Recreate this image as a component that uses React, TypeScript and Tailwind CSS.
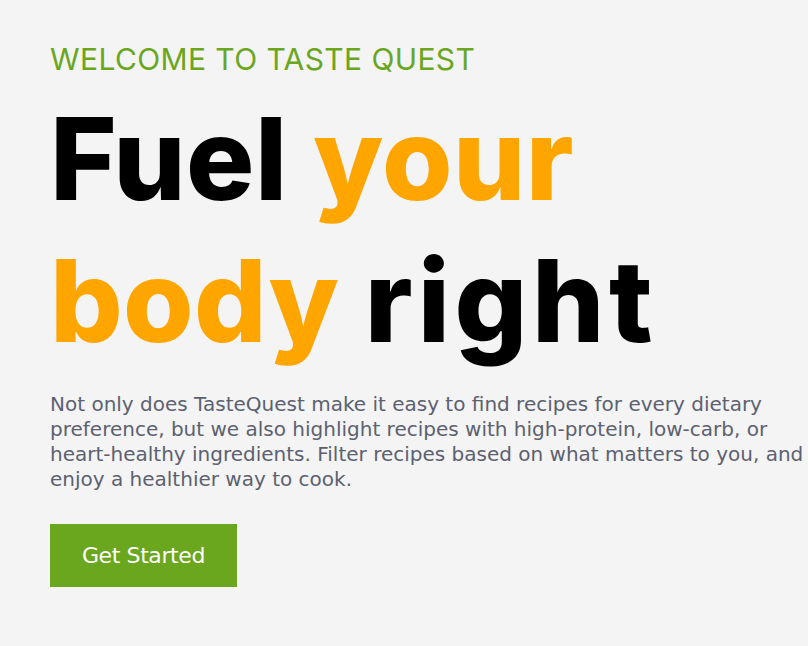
import React from 'react';

export default function App() {
  return (
    <div className="min-h-[646px] w-full bg-[#f4f4f4] pl-[50px] pt-[39px]">
      <p className="font-['Inter',sans-serif] text-[30px] leading-[40px] font-normal tracking-[0.4px] text-[#6aa61e]">
        WELCOME TO TASTE QUEST
      </p>

      <h1 className="mt-[9px] font-['Inter',sans-serif] text-[114px] leading-[142px] font-extrabold tracking-[0.4px] text-black">
        Fuel <span className="text-[#ffa500]">your</span>
        <br />
        <span className="text-[#ffa500]">body</span> <span className="tracking-[4.6px]">right</span>
      </h1>

      <p className="mt-[20px] whitespace-nowrap font-['DejaVu_Sans',sans-serif] text-[20px] leading-[25px] text-[#5c6170]">
        Not only does TasteQuest make it easy to find recipes for every dietary
        <br />
        preference, but we also highlight recipes with high-protein, low-carb, or
        <br />
        heart-healthy ingredients. Filter recipes based on what matters to you, and
        <br />
        enjoy a healthier way to cook.
      </p>

      <button className="mt-[32px] flex h-[63px] w-[187px] items-center justify-center bg-[#6aa61e] font-['DejaVu_Sans',sans-serif] text-[22px] tracking-[-0.4px] text-white">
        Get Started
      </button>
    </div>
  );
}
